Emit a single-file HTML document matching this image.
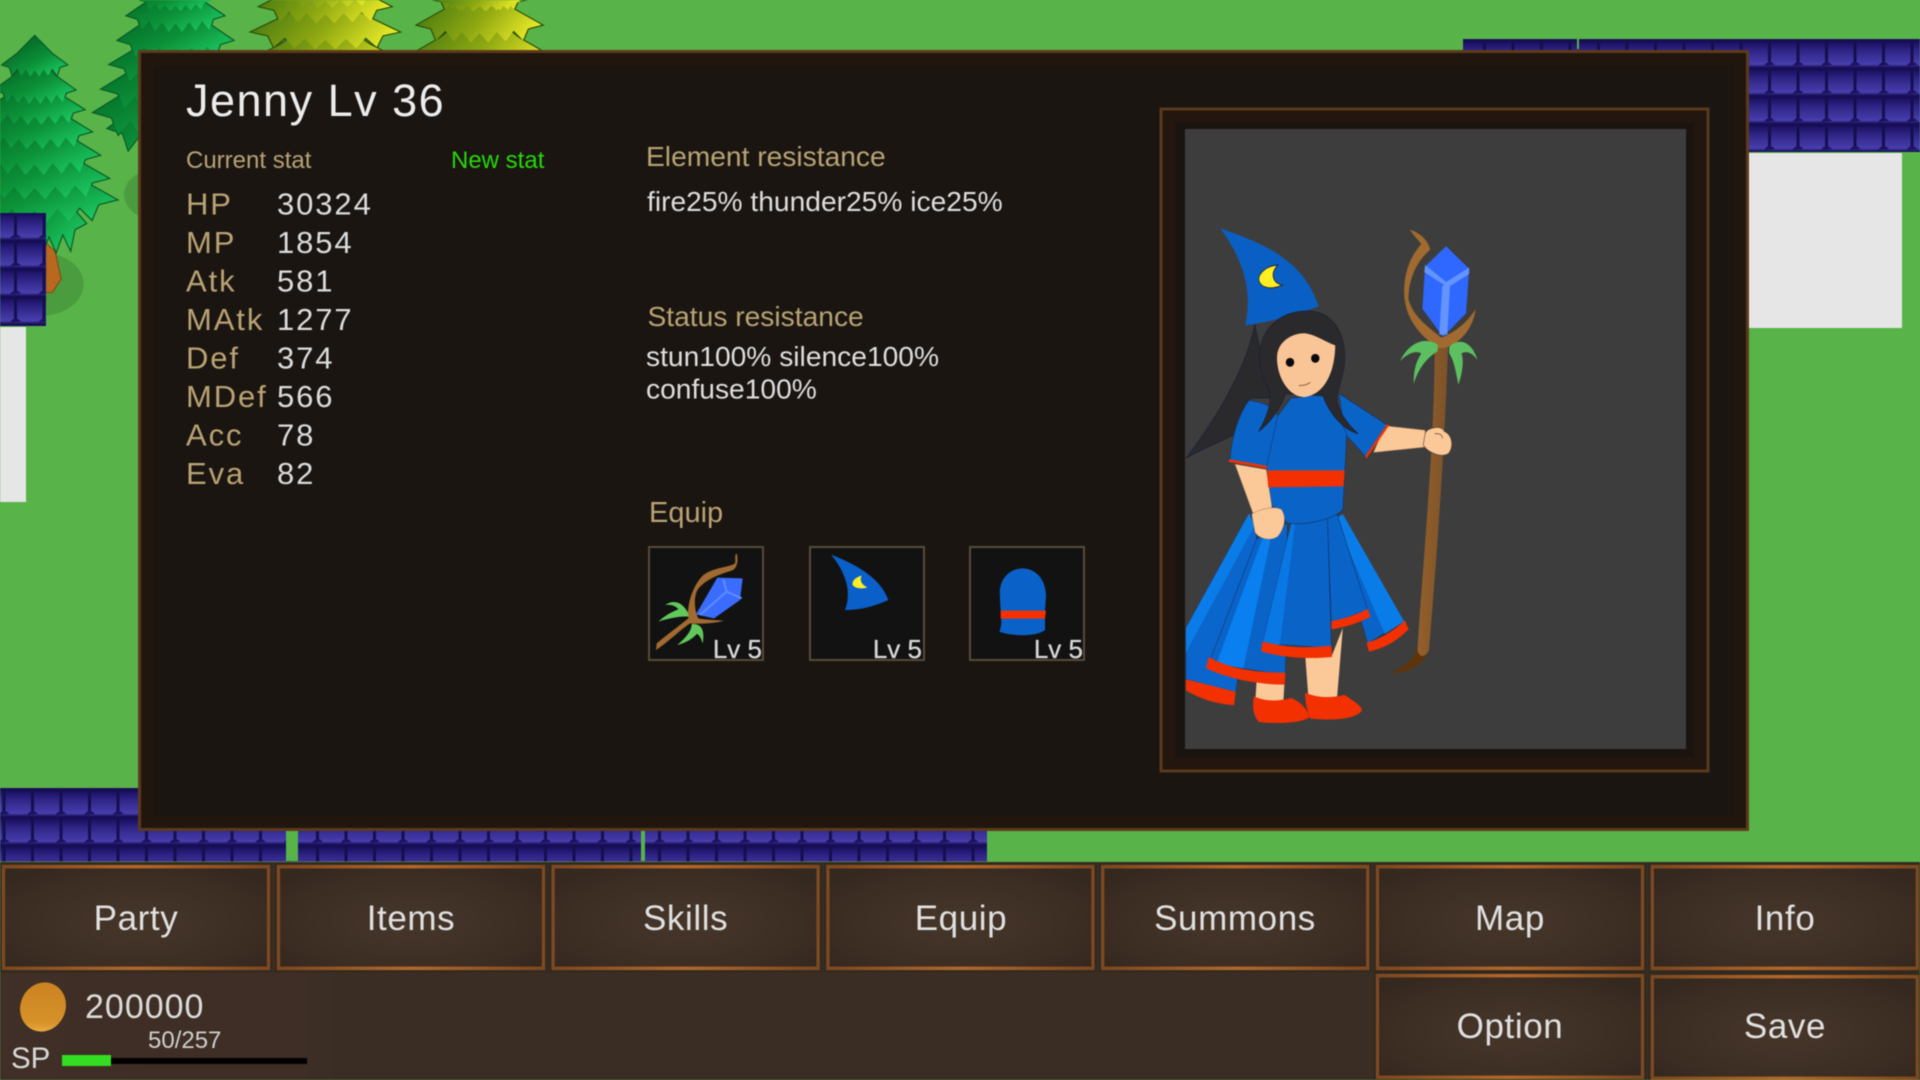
<!DOCTYPE html>
<html><head><meta charset="utf-8"><title>Jenny</title>
<style>
html,body{margin:0;padding:0;background:#58b448;width:1920px;height:1080px;overflow:hidden}
svg{display:block;position:absolute;left:0;top:0;filter:blur(.5px)}
text{font-family:"Liberation Sans",sans-serif;white-space:pre}
.lab{font-size:31px;letter-spacing:1.9px;fill:#b9a374}
.val{font-size:31px;letter-spacing:1.9px;fill:#dcdcdc}
.hd{font-size:28.2px;fill:#b9a374}
.tx{font-size:28.2px;fill:#dedede}
.btn{font-size:35px;letter-spacing:.6px;fill:#e0e0e0;text-anchor:middle}
.lv{font-size:26px;fill:#d8d8d8;text-anchor:end;stroke:#d8d8d8;stroke-width:.3px}
.ns{vector-effect:non-scaling-stroke}
</style></head><body>
<svg width="1920" height="1080" viewBox="0 0 1920 1080" xmlns="http://www.w3.org/2000/svg">
<defs>
<linearGradient id="gG" x1=".2" y1=".3" x2=".8" y2="1"><stop offset="0" stop-color="#056e28"/><stop offset=".5" stop-color="#0c9038"/><stop offset="1" stop-color="#1cc862"/></linearGradient>
<linearGradient id="gY" x1="0" y1=".3" x2="1" y2=".7"><stop offset="0" stop-color="#3f7410"/><stop offset=".55" stop-color="#8fa812"/><stop offset="1" stop-color="#ecec28"/></linearGradient>
<path id="tG" class="ns" fill="url(#gG)" d="M0,0L.55,.45L1,.72L.78,.78L.7,.98L.55,.82L.42,1L.28,.84L.14,1.02L0,.86L-.14,1.02L-.28,.84L-.42,1L-.55,.82L-.7,.98L-.78,.78L-1,.72L-.55,.45Z"/>
<path id="tY" class="ns" fill="url(#gY)" d="M0,0L.55,.45L1,.72L.78,.78L.7,.98L.55,.82L.42,1L.28,.84L.14,1.02L0,.86L-.14,1.02L-.28,.84L-.42,1L-.55,.82L-.7,.98L-.78,.78L-1,.72L-.55,.45Z"/>
<path id="sG" class="ns" fill="#0a5a28" stroke="#0a5a28" stroke-width="2.4" d="M0,0L.55,.45L1,.72L.78,.78L.7,.98L.55,.82L.42,1L.28,.84L.14,1.02L0,.86L-.14,1.02L-.28,.84L-.42,1L-.55,.82L-.7,.98L-.78,.78L-1,.72L-.55,.45Z"/>
<path id="sY" class="ns" fill="#2c4d0c" stroke="#2c4d0c" stroke-width="2.4" d="M0,0L.55,.45L1,.72L.78,.78L.7,.98L.55,.82L.42,1L.28,.84L.14,1.02L0,.86L-.14,1.02L-.28,.84L-.42,1L-.55,.82L-.7,.98L-.78,.78L-1,.72L-.55,.45Z"/>
<linearGradient id="tileG" x1="0" y1="0" x2="0" y2="1"><stop offset="0" stop-color="#1a1060"/><stop offset=".3" stop-color="#2e2484"/><stop offset=".68" stop-color="#4238a4"/><stop offset=".8" stop-color="#483eae"/><stop offset=".9" stop-color="#1a1058"/><stop offset="1" stop-color="#150d52"/></linearGradient>
<pattern id="tile" width="28.5" height="28" patternUnits="userSpaceOnUse">
<rect width="28.5" height="28" fill="url(#tileG)"/>
<rect x="17" width="3" height="23" fill="#14104e"/>
<path d="M13,24Q18,16 24,23Z" fill="#1c1462"/>
</pattern>
<radialGradient id="btnBg" cx=".5" cy=".55" r=".62"><stop offset="0" stop-color="#46362a"/><stop offset=".7" stop-color="#3d2e24"/><stop offset="1" stop-color="#35281e"/></radialGradient>
<linearGradient id="btnBd" x1="0" x2="1" y1="0" y2="0"><stop offset="0" stop-color="#7c4820"/><stop offset=".5" stop-color="#b4682a"/><stop offset="1" stop-color="#7c4820"/></linearGradient>
<g id="btn">
<rect x="-1.5" y="-1.5" width="271" height="108" fill="none" stroke="#2c261c" stroke-width="2" opacity=".6"/>
<rect x="0" y="0" width="268" height="105" fill="url(#btnBg)"/>
<rect x="1.5" y="1.5" width="265" height="102" fill="none" stroke="#7f4a22" stroke-width="3.2"/>
<rect x="0" y="0" width="268" height="3.4" fill="url(#btnBd)"/>
<rect x="0" y="101.6" width="268" height="3.4" fill="url(#btnBd)"/>
</g>
<clipPath id="gray"><rect x="1185" y="129" width="501" height="620"/></clipPath>
<linearGradient id="staffG" x1="0" x2="1" y1="0" y2="0"><stop offset="0" stop-color="#94602c"/><stop offset="1" stop-color="#7c5228"/></linearGradient>
<linearGradient id="coinG" x1=".3" y1="0" x2=".7" y2="1"><stop offset="0" stop-color="#c98220"/><stop offset=".8" stop-color="#d8922a"/><stop offset="1" stop-color="#eeb048"/></linearGradient>
<linearGradient id="bgL" x1="0" x2="1" y1="0" y2="0"><stop offset="0" stop-color="#3f2f26"/><stop offset=".9" stop-color="#3e2e25"/><stop offset="1" stop-color="#3a2e24"/></linearGradient>
</defs>

<rect width="1920" height="1080" fill="#58b448"/>

<!-- trees (zoom coords) -->
<g transform="scale(.40816,.34435)">
<ellipse cx="100" cy="825" rx="105" ry="92" fill="#4b9c3e"/>
<ellipse cx="400" cy="565" rx="96" ry="80" fill="#4b9c3e"/>
<path d="M112,705L135,730L150,810L128,850L112,850Z" fill="#b8691f" stroke="#6d3f12" stroke-width="2"/>
<!-- tree 2 silhouette -->
<use href="#sG" transform="translate(430,200) scale(165,240)"/>
<use href="#sG" transform="translate(430,150) scale(200,245)"/>
<use href="#sG" transform="translate(430,100) scale(180,220)"/>
<use href="#sG" transform="translate(430,50) scale(160,190)"/>
<use href="#sG" transform="translate(430,-20) scale(140,190)"/>
<use href="#sG" transform="translate(430,-70) scale(118,160)"/>
<!-- tree 2 -->
<use href="#tG" transform="translate(430,200) scale(165,240)"/>
<use href="#tG" transform="translate(430,150) scale(200,245)"/>
<use href="#tG" transform="translate(430,100) scale(180,220)"/>
<use href="#tG" transform="translate(430,50) scale(160,190)"/>
<use href="#tG" transform="translate(430,-20) scale(140,190)"/>
<use href="#tG" transform="translate(430,-70) scale(118,160)"/>
<use href="#tG" transform="translate(430,-70) scale(90,100)"/>
<!-- tree 1 silhouette -->
<use href="#sG" transform="translate(85,440) scale(125,290)"/>
<use href="#sG" transform="translate(85,420) scale(200,222)"/>
<use href="#sG" transform="translate(85,370) scale(180,205)"/>
<use href="#sG" transform="translate(85,310) scale(158,195)"/>
<use href="#sG" transform="translate(85,260) scale(138,170)"/>
<use href="#sG" transform="translate(85,210) scale(120,150)"/>
<use href="#sG" transform="translate(85,160) scale(98,140)"/>
<use href="#sG" transform="translate(85,105) scale(78,115)"/>
<!-- tree 1 -->
<use href="#tG" transform="translate(85,440) scale(125,290)"/>
<use href="#tG" transform="translate(85,420) scale(200,222)"/>
<use href="#tG" transform="translate(85,370) scale(180,205)"/>
<use href="#tG" transform="translate(85,310) scale(158,195)"/>
<use href="#tG" transform="translate(85,260) scale(138,170)"/>
<use href="#tG" transform="translate(85,210) scale(120,150)"/>
<use href="#tG" transform="translate(85,160) scale(98,140)"/>
<use href="#tG" transform="translate(85,105) scale(78,115)"/>
<!-- yellow 3 -->
<use href="#sY" transform="translate(797,40) scale(200,200)"/>
<use href="#sY" transform="translate(797,-30) scale(180,170)"/>
<use href="#sY" transform="translate(797,-100) scale(160,165)"/>
<use href="#tY" transform="translate(797,40) scale(200,200)"/>
<use href="#tY" transform="translate(797,-30) scale(180,170)"/>
<use href="#tY" transform="translate(797,-100) scale(160,165)"/>
<use href="#tY" transform="translate(797,-100) scale(130,120)"/>
<!-- yellow 4 -->
<use href="#sY" transform="translate(1175,20) scale(175,200)"/>
<use href="#sY" transform="translate(1175,-50) scale(152,170)"/>
<use href="#sY" transform="translate(1175,-90) scale(120,120)"/>
<use href="#tY" transform="translate(1175,20) scale(175,200)"/>
<use href="#tY" transform="translate(1175,-50) scale(152,170)"/>
<use href="#tY" transform="translate(1175,-90) scale(120,120)"/>
<use href="#tY" transform="translate(1175,-60) scale(100,90)"/>
</g>

<!-- left wall -->
<rect x="0" y="327" width="26" height="175" fill="#e6e6e6"/>
<g transform="translate(-3,326.5)"><rect x="3" y="-113.5" width="46" height="113" fill="url(#tile)"/></g>

<!-- right wall -->
<rect x="1749" y="153" width="153" height="175" fill="#e6e6e6"/>
<g transform="translate(12.5,154)"><rect x="1450.5" y="-115" width="457" height="113" fill="url(#tile)"/></g>
<rect x="1577" y="39" width="2" height="10" fill="#58b448"/>

<!-- bottom wall -->
<g transform="translate(14,847)"><rect x="-14" y="-59" width="987" height="73.5" fill="url(#tile)"/></g>
<rect x="286" y="831" width="12" height="30" fill="#58b448"/>
<rect x="641" y="831" width="4" height="30" fill="#58b448"/>

<!-- panel -->
<rect x="139.5" y="51.5" width="1608" height="778" fill="#1a1511"/>
<rect x="146" y="58" width="1595" height="765" fill="none" stroke="#24170e" stroke-width="14" opacity=".75"/>
<rect x="139.5" y="51.5" width="1608" height="778" fill="none" stroke="#5d3a1c" stroke-width="3"/>

<text x="186" y="116" font-size="45" letter-spacing="1.5" fill="#ececec">Jenny Lv 36</text>
<text x="186" y="168" font-size="24" fill="#b9a374">Current stat</text>
<text x="451" y="168" font-size="24" fill="#26d808">New stat</text>

<text class="lab" x="186" y="214.5">HP</text><text class="val" x="277" y="214.5">30324</text>
<text class="lab" x="186" y="253">MP</text><text class="val" x="277" y="253">1854</text>
<text class="lab" x="186" y="291.5">Atk</text><text class="val" x="277" y="291.5">581</text>
<text class="lab" x="186" y="330">MAtk</text><text class="val" x="277" y="330">1277</text>
<text class="lab" x="186" y="368.5">Def</text><text class="val" x="277" y="368.5">374</text>
<text class="lab" x="186" y="407">MDef</text><text class="val" x="277" y="407">566</text>
<text class="lab" x="186" y="445.5">Acc</text><text class="val" x="277" y="445.5">78</text>
<text class="lab" x="186" y="484">Eva</text><text class="val" x="277" y="484">82</text>

<text class="hd" x="646" y="166">Element resistance</text>
<text class="tx" x="647" y="211">fire25% thunder25% ice25%</text>
<text class="hd" x="647.5" y="326">Status resistance</text>
<text class="tx" x="646" y="366">stun100% silence100%</text>
<text class="tx" x="646" y="398.5">confuse100%</text>
<text x="649" y="522" font-size="29" fill="#b9a374">Equip</text>

<!-- equip boxes -->
<rect x="649" y="547" width="114" height="113" fill="#121212" stroke="#574c38" stroke-width="2"/>
<rect x="810" y="547" width="114" height="113" fill="#121212" stroke="#574c38" stroke-width="2"/>
<rect x="970" y="547" width="114" height="113" fill="#121212" stroke="#574c38" stroke-width="2"/>
<g transform="translate(620,480) scale(.33333)">
<path d="M108,510L110,490C140,465 180,435 205,415C200,380 215,320 250,285C285,260 330,262 345,250C348,240 342,225 350,220C356,240 352,265 335,272C290,285 245,305 230,335C220,360 225,395 235,415C260,420 290,420 312,422C280,432 230,432 210,430C180,450 140,490 108,510Z" fill="#a06a30"/>
<path d="M292,293L368,295L360,360L282,415L228,403Z" fill="#3a6cff"/>
<path d="M310,298L320,335L365,355M320,335L240,405" fill="none" stroke="#5f8cff" stroke-width="6"/>
<path d="M205,400C190,370 165,355 135,375C155,372 170,380 175,388C155,395 130,410 115,425C145,415 180,408 205,410Z" fill="#62c85c"/>
<path d="M215,432C245,430 255,450 248,490C242,470 235,462 230,462C220,475 195,490 172,495C195,475 215,455 215,432Z" fill="#62c85c"/>
<path d="M633,224C700,250 780,290 805,360C760,380 720,390 675,390C695,340 680,280 633,224Z" fill="#0a60c8"/>
<path d="M725,287C705,292 695,305 698,315C705,325 725,328 742,322C725,315 718,300 725,287Z" fill="#ffee22"/>
<path d="M1205,265C1250,265 1278,300 1278,350L1275,390L1275,450C1250,470 1180,470 1138,455C1150,430 1140,390 1140,350C1135,300 1165,268 1205,265Z" fill="#0a62c8"/>
<path d="M1142,392L1278,392L1275,416L1142,416Z" fill="#f83000"/>
</g>
<text class="lv" x="762" y="658">Lv 5</text>
<text class="lv" x="922" y="658">Lv 5</text>
<text class="lv" x="1083" y="658">Lv 5</text>

<!-- portrait frame -->
<rect x="1161" y="109" width="547" height="662" fill="#1a1410" stroke="#5a3a1c" stroke-width="3"/>
<rect x="1169" y="117" width="531" height="646" fill="none" stroke="#22160e" stroke-width="12"/>
<rect x="1185" y="129" width="501" height="620" fill="#3d3d3d"/>
<g clip-path="url(#gray)"><g transform="translate(1140,90) scale(.38270,.44643)">
<!-- staff -->
<path d="M725,1245L755,1250C745,1285 700,1310 658,1305C695,1290 720,1275 725,1245Z" fill="#5e3408"/>
<path d="M770,570L805,570C800,700 790,900 755,1255C745,1272 730,1272 725,1255C735,1100 770,800 770,570Z" fill="url(#staffG)"/>
<path d="M705,313C735,320 755,340 758,358C720,385 700,430 702,470C715,510 760,535 788,555C830,540 860,515 877,490C870,540 830,570 795,578L780,578C730,550 690,510 690,450C692,400 710,370 735,345C725,335 715,325 705,313Z" fill="#a06a30"/>
<path d="M778,570C740,550 700,570 680,607C705,585 725,585 735,590C720,610 715,630 715,658C730,620 750,600 778,585Z" fill="#5cc060"/>
<path d="M808,575C840,550 870,570 882,605C865,585 850,585 840,590C848,610 840,640 832,660C825,630 820,605 808,590Z" fill="#5cc060"/>
<path d="M800,350L860,400L852,500L792,553L738,490L745,395Z" fill="#2f68ff"/>
<path d="M745,392L800,430L860,398L860,412L805,442L743,408Z" fill="#6494ff"/>
<path d="M790,438L810,438L803,548L782,548Z" fill="#6494ff"/>
<!-- hair back -->
<path d="M300,525C285,590 240,690 120,825C170,800 220,785 250,770L290,690L340,690Z" fill="#2a2a2d" stroke="#1a2238" stroke-width="2"/>
<!-- hat -->
<path d="M210,310C330,345 430,385 467,485C400,505 340,520 275,527C295,450 270,380 210,310Z" fill="#0a5fc4"/>
<path d="M360,392C325,395 305,415 312,430C320,445 345,447 372,437C345,432 340,410 360,392Z" fill="#ffee22" stroke="#222" stroke-width="2"/>
<!-- far sleeve & arm -->
<path d="M640,752L745,762L745,800L610,812Z" fill="#fbc898" stroke="#8a6a50" stroke-width="1"/>
<path d="M520,680L645,750L590,823C570,800 545,780 535,770Z" fill="#0a64c8" stroke="#12346a" stroke-width="1.5"/>
<path d="M648,750L590,823" stroke="#f33000" stroke-width="6"/>
<!-- legs -->
<path d="M305,1320L378,1320L375,1365C350,1375 320,1370 302,1360Z" fill="#fbc898"/>
<path d="M432,1270L500,1270L530,1205L515,1360L440,1360Z" fill="#fbc898"/>
<path d="M298,1358C330,1372 370,1368 395,1362C420,1370 440,1390 443,1405C420,1420 340,1420 310,1415C295,1400 293,1380 298,1358Z" fill="#f33000"/>
<path d="M432,1350C470,1365 510,1360 535,1355C560,1370 580,1380 580,1390C560,1412 500,1412 445,1408C440,1395 430,1375 432,1350Z" fill="#f33000"/>
<!-- skirt -->
<path d="M285,948L120,1205V1320L250,1350L305,1000Z" fill="#0a66cc" stroke="#12346a" stroke-width="1.5"/>
<path d="M285,948L120,1205V1260L300,975Z" fill="#0a7ce8"/>
<path d="M120,1320L250,1348L246,1378C200,1375 160,1365 120,1345Z" fill="#f33000"/>
<path d="M515,950L690,1190L595,1240L500,960Z" fill="#0a64c8" stroke="#12346a" stroke-width="1.5"/>
<path d="M530,950L690,1190L640,1218L510,960Z" fill="#0a7ce8"/>
<path d="M692,1188L702,1208C670,1235 640,1250 598,1258L592,1238C630,1230 665,1210 692,1188Z" fill="#f33000"/>
<path d="M490,960L515,950L595,1165L500,1195Z" fill="#0a64c8" stroke="#12346a" stroke-width="1.5"/>
<path d="M595,1162L602,1180C570,1195 530,1205 500,1208L500,1190C530,1185 570,1175 595,1162Z" fill="#f33000"/>
<path d="M305,1005L180,1285L380,1310L385,970Z" fill="#0a64c8" stroke="#12346a" stroke-width="1.5"/>
<path d="M320,1005L200,1285L270,1295L345,990Z" fill="#0a80f0"/>
<path d="M180,1270C240,1300 320,1305 380,1305L378,1332C300,1332 220,1315 172,1295Z" fill="#f33000"/>
<path d="M395,970L490,960L500,1250L320,1240Z" fill="#0a64c8" stroke="#12346a" stroke-width="1.5"/>
<path d="M395,972L320,1240L365,1243L405,972Z" fill="#0a78e4"/>
<path d="M320,1235C380,1250 440,1250 500,1245L502,1270C440,1275 380,1272 317,1258Z" fill="#f33000"/>
<!-- torso -->
<path d="M395,690C420,690 450,685 475,675C500,710 525,740 540,770L530,940C500,965 430,975 385,970L335,920L330,830L360,730Z" fill="#0a64c8" stroke="#12346a" stroke-width="1.5"/>
<path d="M248,838L330,850L345,935L295,948Z" fill="#fbc898" stroke="#8a6a50" stroke-width="1"/>
<path d="M285,695C310,700 340,700 360,730L330,845L235,828C240,780 255,730 285,695Z" fill="#0a64c8" stroke="#12346a" stroke-width="1.5"/>
<path d="M232,830L332,845" stroke="#f33000" stroke-width="6"/>
<path d="M332,852L535,852L532,888L335,890Z" fill="#f33000"/>
<path d="M292,950C310,940 350,930 370,940C385,960 375,985 360,1000C340,1012 310,1005 300,990Z" fill="#fbc898" stroke="#8a6a50" stroke-width="1"/>
<!-- hand on staff -->
<path d="M745,770C750,755 790,750 795,765C815,770 822,800 805,815C785,825 750,810 740,795Z" fill="#fbc898" stroke="#5a4030" stroke-width="1.5"/>
<path d="M770,770Q790,768 790,780" fill="none" stroke="#5a4030" stroke-width="1.5"/>
<!-- head -->
<path d="M312,600C312,540 360,495 440,495C505,497 535,545 535,600C535,640 510,680 515,700C525,730 550,755 570,770C530,760 495,725 478,685L380,680C370,710 340,745 310,765C340,720 345,690 335,670C320,640 312,620 312,600Z" fill="#2a2a2d" stroke="#1a2238" stroke-width="2"/>
<path d="M358,600C358,565 395,545 430,545C460,548 485,565 510,572C510,620 490,680 430,688C390,688 358,645 358,600Z" fill="#f9c596"/>
<ellipse cx="392" cy="610" rx="11" ry="10" fill="#0a0a0a"/>
<ellipse cx="458" cy="601" rx="11" ry="10" fill="#0a0a0a"/>
<path d="M415,662Q432,663 445,655" fill="none" stroke="#a06a50" stroke-width="2.5"/>
</g></g>

<!-- bottom bar -->
<rect x="0" y="862" width="1920" height="218" fill="#3a2e24"/>
<rect x="0" y="862" width="338" height="218" fill="url(#bgL)"/>
<use href="#btn" transform="translate(2,865)"/>
<use href="#btn" transform="translate(277,865)"/>
<use href="#btn" transform="translate(551.6,865)"/>
<use href="#btn" transform="translate(826.4,865)"/>
<use href="#btn" transform="translate(1101.2,865)"/>
<use href="#btn" transform="translate(1376,865)"/>
<use href="#btn" transform="translate(1650.8,865)"/>
<use href="#btn" transform="translate(1376,974)"/>
<use href="#btn" transform="translate(1650.8,975)"/>
<text class="btn" x="136" y="930">Party</text>
<text class="btn" x="411" y="930">Items</text>
<text class="btn" x="685.6" y="930">Skills</text>
<text class="btn" x="961" y="930">Equip</text>
<text class="btn" x="1235" y="930">Summons</text>
<text class="btn" x="1510" y="930">Map</text>
<text class="btn" x="1785" y="930">Info</text>
<text class="btn" x="1510" y="1038">Option</text>
<text class="btn" x="1785" y="1038">Save</text>

<ellipse cx="43" cy="1007" rx="22.5" ry="25" transform="rotate(25 43 1007)" fill="url(#coinG)"/>
<text x="85" y="1018" font-size="34" letter-spacing="1" fill="#dcdcdc">200000</text>
<text x="148" y="1048" font-size="24" fill="#cfcfcf">50/257</text>
<text x="11" y="1068" font-size="29.5" fill="#d8d8d8">SP</text>
<rect x="62" y="1058" width="245" height="6" fill="#000"/>
<rect x="62" y="1055" width="49" height="11" fill="#33dd22"/>
</svg>
</body></html>
